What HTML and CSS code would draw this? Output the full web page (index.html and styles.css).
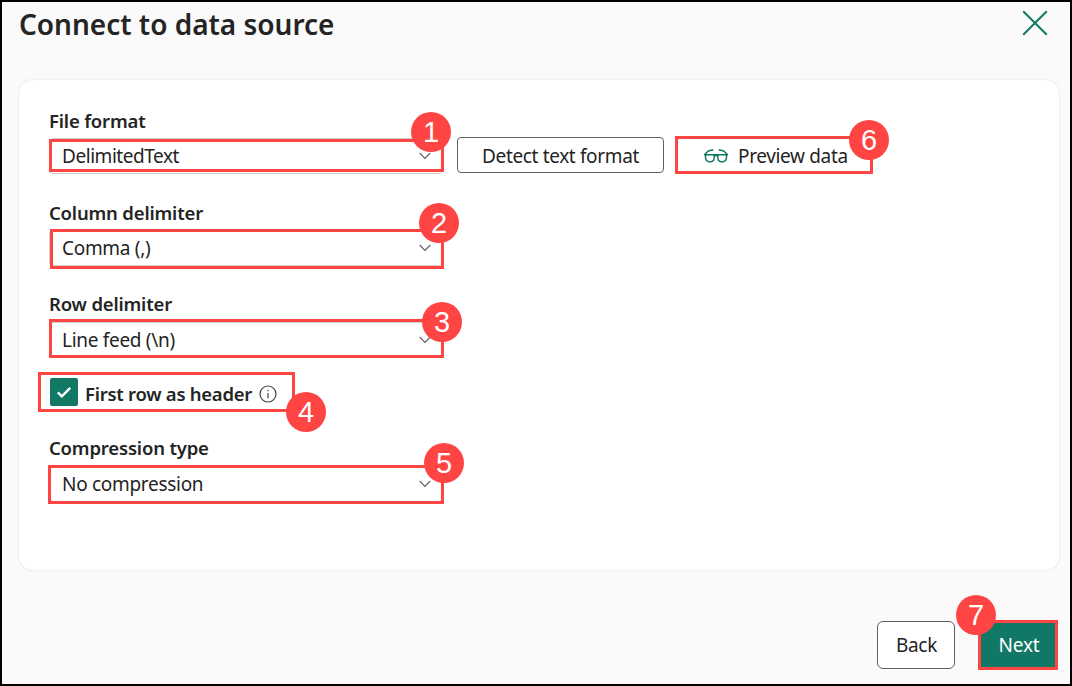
FILE: index.html
```html
<!DOCTYPE html>
<html lang="en">
<head>
<meta charset="utf-8">
<title>Connect to data source</title>
<link rel="stylesheet" href="styles.css">
</head>
<body>
<div class="dialog">
  <header class="header">
    <h1 class="title">Connect to data source</h1>
    <svg class="close" viewBox="0 0 26 26"><path d="M1.2 1.2 24.8 24.8M24.8 1.2 1.2 24.8"/></svg>
  </header>
  <main class="card">
    <section class="field f-format">
      <label class="label l-format">File format</label>
      <div class="row">
        <div class="select"><span class="value v-format">DelimitedText</span><svg class="chevron" viewBox="0 0 12 8"><path d="M.7 1 6 6.3 11.3 1"/></svg><i class="mark m1"></i><b class="badge b1">1</b></div>
        <button class="btn detect"><span>Detect text format</span></button>
        <div class="preview">
          <svg class="glasses" viewBox="0 0 24 14"><path d="M1.600 5.800H10Q11.300 12.900 6 12.900T1.600 5.800ZM14 5.800H22.400Q23.300 12.900 18 12.900T14 5.800ZM10 7Q12 6 14 7M0 5.800H24M.8 5.200 4.300 2 9.300 .8M23.200 5.200 19.700 2 14.700 .8"/></svg>
          <span>Preview data</span><i class="mark m6"></i><b class="badge b6">6</b>
        </div>
      </div>
    </section>
    <section class="field f-column">
      <label class="label l-column">Column delimiter</label>
      <div class="select"><span class="value v-column">Comma (,)</span><svg class="chevron" viewBox="0 0 12 8"><path d="M.7 1 6 6.3 11.3 1"/></svg><i class="mark m2"></i><b class="badge b2">2</b></div>
    </section>
    <section class="field f-row">
      <label class="label l-row">Row delimiter</label>
      <div class="select"><span class="value v-row">Line feed (\n)</span><svg class="chevron" viewBox="0 0 12 8"><path d="M.7 1 6 6.3 11.3 1"/></svg><i class="mark m3"></i><b class="badge b3">3</b></div>
    </section>
    <div class="check-row">
      <span class="checkbox"><svg viewBox="0 0 28 28"><path d="m7.800 14.300 4 4 8.400-8.400"/></svg></span>
      <span class="label l-header">First row as header</span>
      <svg class="info" viewBox="0 0 18 18"><circle cx="9" cy="9" r="8"/><path d="M9 8v5.200M9 4.700v1.500"/></svg>
      <i class="mark m4"></i><b class="badge b4">4</b>
    </div>
    <section class="field f-compression">
      <label class="label l-compression">Compression type</label>
      <div class="select"><span class="value v-compression">No compression</span><svg class="chevron" viewBox="0 0 12 8"><path d="M.7 1 6 6.3 11.3 1"/></svg><i class="mark m5"></i><b class="badge b5">5</b></div>
    </section>
  </main>
  <footer class="footer">
    <button class="btn back"><span>Back</span></button>
    <button class="next"><span>Next</span><b class="badge b7">7</b></button>
  </footer>
</div>
</body>
</html>
```

FILE: styles.css
```css
* { box-sizing: border-box; }
body { margin: 0; font-family: "Noto Sans", "Open Sans", sans-serif; font-size: 19px; color: #242424; }
.dialog { width: 1072px; height: 686px; border: 2px solid #000; background: #fafafa; display: flex; flex-direction: column; }
.header { height: 77px; padding: 0 22px 0 17px; display: flex; justify-content: space-between; align-items: flex-start; }
.title { margin: 3px 0 0; font-size: 28px; line-height: 38px; font-weight: 600; letter-spacing: -0.02px; white-space: nowrap; }
.close { width: 26px; height: 26px; margin-top: 8px; fill: none; stroke: #117865; stroke-width: 2; }
.card { height: 492px; margin: 0 10px 0 16px; padding: 28px 30px; background: #fff; border: 1px solid #f0f0f0; border-radius: 15px; box-shadow: 0 0 2px #0000000d; display: flex; flex-direction: column; }
.field { flex: none; }
.f-format { height: 92px; }
.f-column { height: 91px; }
.f-row { height: 87px; }
.label { display: block; height: 28px; line-height: 26px; font-weight: 600; font-size: 18.500px; letter-spacing: -0.180px; white-space: nowrap; }
.l-column { height: 30px; }
.l-row, .l-compression { height: 31px; }
.row { display: flex; align-items: flex-end; }
.select { width: 394px; height: 36px; position: relative; display: flex; align-items: center; justify-content: space-between; padding: 0 11px 0 12px; border: 1px solid #d1d1d1; border-radius: 4px; }
.value { white-space: nowrap; letter-spacing: -0.3px; }
.v-format { letter-spacing: -0.450px; }
.chevron { width: 12px; height: 8px; fill: none; stroke: #616161; stroke-width: 1.200; }
.mark { position: absolute; border: 3px solid #ff4444; }
.badge { position: absolute; width: 40px; height: 40px; border-radius: 50%; background: #ff4444; color: #fff; font: 400 29px/40px "Liberation Sans", Arial, sans-serif; text-align: center; letter-spacing: 0; }
.m1 { left: -1px; top: 0; width: 395px; height: 33px; }
.m2 { left: 0; top: -2px; width: 394px; height: 40px; }
.m3 { left: -1px; top: -4px; width: 395px; height: 39px; }
.m4 { left: -11px; top: -6px; width: 257px; height: 40px; }
.m5 { left: -2px; top: -2px; width: 396px; height: 39px; }
.m6 { left: 0; top: 0; width: 198px; height: 38px; }
.b1 { left: 361px; top: -27px; }
.b2 { left: 369px; top: -28px; }
.b3 { left: 372px; top: -21px; }
.b4 { left: 237px; top: 14px; }
.b5 { left: 374px; top: -24px; }
.b6 { left: 174px; top: -16px; }
.b7 { left: -25px; top: -28px; }
.btn { padding: 0; font: inherit; color: #242424; background: #fff; border: 1px solid #616161; border-radius: 4px; white-space: nowrap; letter-spacing: -0.350px; }
.detect { width: 207px; height: 36px; margin: 0 0 1px 14px; padding-top: 2px; }
.preview { position: relative; width: 198px; height: 38px; margin-left: 11px; padding: 2px 0 0 29px; display: flex; align-items: center; gap: 10px; white-space: nowrap; letter-spacing: -0.350px; }
.glasses { width: 24px; height: 14px; fill: none; stroke: #117865; stroke-width: 1.500; }
.check-row { position: relative; height: 57px; display: flex; align-items: flex-start; }
.checkbox { width: 28px; height: 28px; margin-left: 1px; border-radius: 2px; background: #117865; flex: none; }
.checkbox svg { display: block; fill: none; stroke: #fff; stroke-width: 2.500; }
.l-header { width: 168px; margin: 3px 6px 0 7px; letter-spacing: -0.270px; }
.info { width: 18px; height: 18px; margin-top: 7px; fill: none; stroke: #424242; stroke-width: 1.200; }
.footer { flex: 1; padding: 49px 12px 0; display: flex; justify-content: flex-end; gap: 23px; }
.back { width: 78px; height: 48px; margin-top: 1px; padding-left: 1px; border-radius: 6px; }
.next { position: relative; width: 80px; height: 50px; padding: 0 0 0 2px; border: 3px solid #ff4444; background: #117865; color: #fff; font: inherit; letter-spacing: -0.200px; }
```
